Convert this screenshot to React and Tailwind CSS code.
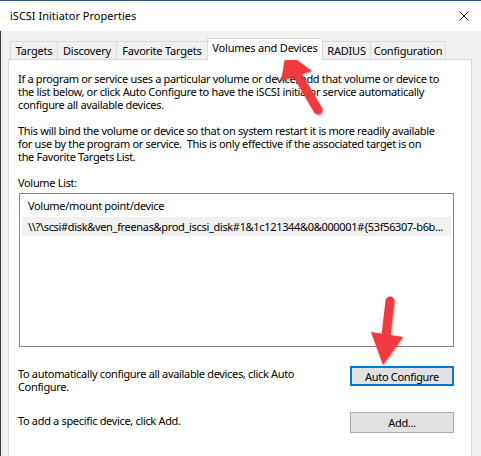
import React from "react";

const font = { fontFamily: '"Noto Sans", "Liberation Sans", sans-serif' };

const tabs = [
  { label: "Targets", w: "w-[48px]" },
  { label: "Discovery", w: "w-[60px]" },
  { label: "Favorite Targets", w: "w-[92px]" },
  { label: "Volumes and Devices", w: "w-[116px]", selected: true },
  { label: "RADIUS", w: "w-[49px]" },
  { label: "Configuration", w: "w-[76px]" },
];

function Tab({ label, selected, w, first }) {
  if (selected) {
    return (
      <div className={`relative z-10 -mb-px -ml-px flex h-[22px] ${w} justify-center self-end whitespace-nowrap border border-b-0 border-[#d9d9d9] bg-white pt-[2px] leading-[14px]`}>
        {label}
      </div>
    );
  }
  return (
    <div className={`flex h-[18px] ${w} ${first ? "" : "-ml-px"} items-center justify-center self-end whitespace-nowrap border border-b-0 border-[#d9d9d9] bg-[#f0f0f0] leading-[14px]`}>
      {label}
    </div>
  );
}

function Arrows() {
  return (
    <svg className="pointer-events-none absolute left-0 top-0" width="481" height="456" viewBox="0 0 481 456">
      <defs>
        <filter id="sh" x="-20%" y="-20%" width="140%" height="140%">
          <feDropShadow dx="1" dy="1" stdDeviation="1.2" floodColor="#000" floodOpacity="0.35" />
        </filter>
      </defs>
      <g filter="url(#sh)" fill="#ef3b3f">
        <line x1="318" y1="110" x2="298" y2="76" stroke="#ef3b3f" strokeWidth="9" strokeLinecap="round" />
        <polygon points="286,52 312,71 281,81" />
        <line x1="390" y1="301" x2="386" y2="336" stroke="#ef3b3f" strokeWidth="9" strokeLinecap="round" />
        <polygon points="371,332 403,337 383,365" />
      </g>
    </svg>
  );
}

export default function App() {
  return (
    <div className="relative h-[456px] w-[481px] overflow-hidden bg-[#f0f0f0] text-[11px] tracking-[-0.33px] text-black" style={font}>
      <div className="flex h-[31px] items-center justify-between border-t border-[#2f5f80] bg-white pl-[10px] pr-[12px]">
        <span className="tracking-[0px]">iSCSI Initiator Properties</span>
        <svg width="10" height="10" viewBox="0 0 10 10">
          <path d="M0.5 0.5 L9.5 9.5 M9.5 0.5 L0.5 9.5" stroke="#111" strokeWidth="1" />
        </svg>
      </div>
      <div className="h-[425px] border-l border-[#3a3a3a] pl-[7px] pr-[9px] pt-[7px]">
        <div className="flex h-[21px] items-end pl-[2px] tracking-[-0.2px]">
          {tabs.map((t, i) => (
            <Tab key={t.label} {...t} first={i === 0} />
          ))}
        </div>
        <div className="flex h-[400px] flex-col border border-[#d9d9d9] bg-white pl-[9px] pr-[17px] pt-[12px] leading-[13px]">
          <p className="whitespace-nowrap">
            If a program or service uses a particular volume or device, add that volume or device to
            <br />
            the list below, or click Auto Configure to have the iSCSI initiator service automatically
            <br />
            configure all available devices.
          </p>
          <p className="mt-[13px] whitespace-nowrap">
            This will bind the volume or device so that on system restart it is more readily available
            <br />
            for use by the program or service.&nbsp; This is only effective if the associated target is on
            <br />
            the Favorite Targets List.
          </p>
          <p className="mt-[13px]">Volume List:</p>
          <div className="ml-[1px] mt-[4px] h-[154px] w-[435px] border border-[#828790] bg-white px-[2px] pt-[5px]">
            <div className="px-[6px] leading-[14px]">Volume/mount point/device</div>
            <div className="mt-[4px] flex h-[19px] items-center overflow-hidden whitespace-nowrap bg-[#f0f0f0] px-[6px]">
              {"\\\\?\\scsi#disk&ven_freenas&prod_iscsi_disk#1&1c121344&0&000001#{53f56307-b6b..."}
            </div>
          </div>
          <div className="mt-[20px] flex items-start justify-between">
            <p className="whitespace-nowrap">
              To automatically configure all available devices, click Auto
              <br />
              Configure.
            </p>
            <div className="-mt-[1px] flex h-[20px] w-[104px] items-center justify-center border-2 border-[#0078d7] bg-[#e1e1e1]">
              Auto Configure
            </div>
          </div>
          <div className="mt-[19px] flex items-start justify-between">
            <p className="pt-[2px]">To add a specific device, click Add.</p>
            <div className="flex h-[21px] w-[104px] items-center justify-center border border-[#adadad] bg-[#e1e1e1]">
              Add...
            </div>
          </div>
        </div>
      </div>
      <Arrows />
    </div>
  );
}
